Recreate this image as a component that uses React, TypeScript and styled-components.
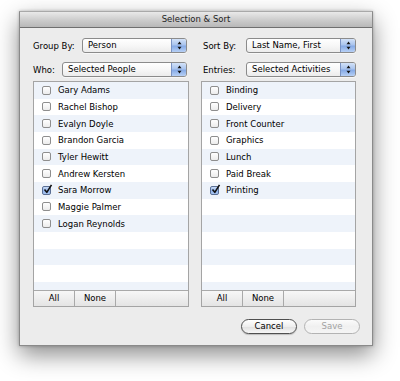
import React from "react";
import styled, { createGlobalStyle } from "styled-components";

const Global = createGlobalStyle`
  html, body { margin: 0; padding: 0; background: #ffffff; }
  body { font-family: "DejaVu Sans", "Liberation Sans", sans-serif; font-size: 8.5px; color: #000; }
`;

const Page = styled.div`
  width: 400px;
  height: 381px;
  overflow: hidden;
  padding: 11px 0 0 19px;
  box-sizing: border-box;
`;

const Window = styled.div`
  width: 354px;
  height: 335px;
  box-sizing: border-box;
  border: 1px solid #8a8a8a;
  border-top-color: #a9a9a9;
  background: #ececec;
  box-shadow: 0 9px 22px rgba(0, 0, 0, 0.45), 0 0 3px rgba(0, 0, 0, 0.25);
  display: flex;
  flex-direction: column;
`;

const TitleBar = styled.div`
  height: 15px;
  line-height: 15px;
  text-align: center;
  color: #222;
  border-bottom: 1px solid #6f6f6f;
  background: linear-gradient(#e9e9e9, #c9c9c9 60%, #b8b8b8);
`;

const Body = styled.div`
  flex: 1;
  padding: 10px 12px 0 13px;
  display: flex;
  flex-direction: column;
`;

const Columns = styled.div`
  display: grid;
  grid-template-columns: 156px 155px;
  column-gap: 12px;
`;

const Column = styled.div`
  display: flex;
  flex-direction: column;
`;

const Fields = styled.div<{ $left?: number; $right?: number }>`
  display: flex;
  flex-direction: column;
  gap: 9px;
  margin-bottom: 4px;
  padding-left: ${(p) => p.$left ?? 0}px;
  padding-right: ${(p) => p.$right ?? 0}px;
`;

const FieldRow = styled.div`
  display: flex;
  align-items: center;
  height: 15px;
`;

const Label = styled.span<{ $w: number }>`
  width: ${(p) => p.$w}px;
  flex: none;
  white-space: nowrap;
`;

const Select = styled.div`
  flex: 1;
  height: 15px;
  box-sizing: border-box;
  border: 1px solid #8b8b8b;
  border-radius: 3px;
  background: linear-gradient(#ffffff, #f7f7f7 50%, #ececec);
  display: flex;
  align-items: stretch;
  overflow: hidden;
  box-shadow: 0 1px 0 rgba(255, 255, 255, 0.6);
`;

const SelectText = styled.span`
  flex: 1;
  padding-left: 5px;
  line-height: 13px;
  white-space: nowrap;
`;

const SelectArrow = styled.span`
  width: 14px;
  flex: none;
  border-left: 1px solid #7a93c4;
  background: linear-gradient(#d3e2f8, #a9c4ee 45%, #86aae6 55%, #b7d0f5);
  display: flex;
  align-items: center;
  justify-content: center;
`;

const ListBox = styled.div`
  height: 226px;
  box-sizing: border-box;
  border: 1px solid #a4a4a4;
  background: #fff;
  display: flex;
  flex-direction: column;
`;

const Rows = styled.div`
  height: 208px;
  overflow: hidden;
`;

const Row = styled.div<{ $striped: boolean; $indent: number }>`
  height: 16.67px;
  display: flex;
  align-items: center;
  gap: 7px;
  padding-left: ${(p) => p.$indent}px;
  background: ${(p) => (p.$striped ? "#eef3fa" : "#ffffff")};
  white-space: nowrap;
`;

const Box = styled.span<{ $checked: boolean }>`
  width: 9px;
  height: 9px;
  box-sizing: border-box;
  flex: none;
  border: 1px solid ${(p) => (p.$checked ? "#5a6f95" : "#8e8e8e")};
  border-radius: 2px;
  background: ${(p) =>
    p.$checked
      ? "linear-gradient(#c9dcf7, #8fb2ea 55%, #a9c6f2)"
      : "linear-gradient(#ffffff, #ececec)"};
  position: relative;
`;

const Check = styled.svg`
  position: absolute;
  left: 0px;
  top: -3px;
  overflow: visible;
`;

const BottomBar = styled.div`
  height: 16px;
  box-sizing: border-box;
  border-top: 1px solid #a9a9a9;
  background: linear-gradient(#f7f7f7, #e4e4e4);
  display: flex;
`;

const BarButton = styled.span`
  width: 41px;
  box-sizing: border-box;
  border-right: 1px solid #a9a9a9;
  text-align: center;
  line-height: 15px;
`;

const Footer = styled.div`
  margin-top: 12px;
  display: flex;
  justify-content: flex-end;
  gap: 7px;
`;

const PushButton = styled.button<{ $disabled?: boolean }>`
  width: 56px;
  height: 15px;
  box-sizing: border-box;
  padding: 0;
  margin: 0;
  font-family: "DejaVu Sans", sans-serif;
  font-size: 8.5px;
  line-height: 13px;
  border-radius: 8px;
  border: 1px solid ${(p) => (p.$disabled ? "#b3b3b3" : "#4f4f4f")};
  color: ${(p) => (p.$disabled ? "#a2a2a2" : "#000")};
  background: ${(p) =>
    p.$disabled
      ? "linear-gradient(#fbfbfb, #f0f0f0 50%, #f5f5f5)"
      : "linear-gradient(#ffffff, #eeeeee 50%, #e2e2e2 55%, #f6f6f6)"};
  box-shadow: ${(p) => (p.$disabled ? "none" : "0 1px 1px rgba(0,0,0,0.2)")};
`;

const Arrows = () => (
  <svg width="5" height="9" viewBox="0 0 5 9">
    <path d="M2.5 0.5 L4.5 3.2 L0.5 3.2 Z" fill="#111" />
    <path d="M2.5 8.5 L4.5 5.8 L0.5 5.8 Z" fill="#111" />
  </svg>
);

const CheckBox = ({ checked }: { checked: boolean }) => (
  <Box $checked={checked}>
    {checked && (
      <Check width="10" height="10" viewBox="0 0 10 10">
        <path d="M1.5 5.5 L3.8 8.3 L8.5 0.8" stroke="#111" strokeWidth="1.6" fill="none" strokeLinejoin="round" />
      </Check>
    )}
  </Box>
);

type Item = { name: string; checked?: boolean };

const List = ({ items, indent }: { items: Item[]; indent: number }) => {
  const rows = Array.from({ length: 13 }, (_, i) => items[i]);
  return (
    <ListBox>
      <Rows>
        {rows.map((it, i) => (
          <Row key={i} $striped={i % 2 === 0} $indent={indent}>
            {it && (
              <>
                <CheckBox checked={!!it.checked} />
                <span>{it.name}</span>
              </>
            )}
          </Row>
        ))}
      </Rows>
      <BottomBar>
        <BarButton>All</BarButton>
        <BarButton>None</BarButton>
      </BottomBar>
    </ListBox>
  );
};

const people: Item[] = [
  { name: "Gary Adams" },
  { name: "Rachel Bishop" },
  { name: "Evalyn Doyle" },
  { name: "Brandon Garcia" },
  { name: "Tyler Hewitt" },
  { name: "Andrew Kersten" },
  { name: "Sara Morrow", checked: true },
  { name: "Maggie Palmer" },
  { name: "Logan Reynolds" },
];

const activities: Item[] = [
  { name: "Binding" },
  { name: "Delivery" },
  { name: "Front Counter" },
  { name: "Graphics" },
  { name: "Lunch" },
  { name: "Paid Break" },
  { name: "Printing", checked: true },
];

export default function App() {
  return (
    <>
      <Global />
      <Page>
        <Window>
          <TitleBar>Selection &amp; Sort</TitleBar>
          <Body>
            <Columns>
              <Column>
                <Fields $right={2}>
                  <FieldRow>
                    <Label $w={49}>Group By:</Label>
                    <Select>
                      <SelectText>Person</SelectText>
                      <SelectArrow><Arrows /></SelectArrow>
                    </Select>
                  </FieldRow>
                  <FieldRow>
                    <Label $w={29}>Who:</Label>
                    <Select>
                      <SelectText>Selected People</SelectText>
                      <SelectArrow><Arrows /></SelectArrow>
                    </Select>
                  </FieldRow>
                </Fields>
                <List items={people} indent={8} />
              </Column>
              <Column>
                <Fields $left={2}>
                  <FieldRow>
                    <Label $w={43}>Sort By:</Label>
                    <Select>
                      <SelectText>Last Name, First</SelectText>
                      <SelectArrow><Arrows /></SelectArrow>
                    </Select>
                  </FieldRow>
                  <FieldRow>
                    <Label $w={43}>Entries:</Label>
                    <Select>
                      <SelectText>Selected Activities</SelectText>
                      <SelectArrow><Arrows /></SelectArrow>
                    </Select>
                  </FieldRow>
                </Fields>
                <List items={activities} indent={8} />
              </Column>
            </Columns>
            <Footer>
              <PushButton>Cancel</PushButton>
              <PushButton $disabled>Save</PushButton>
            </Footer>
          </Body>
        </Window>
      </Page>
    </>
  );
}
